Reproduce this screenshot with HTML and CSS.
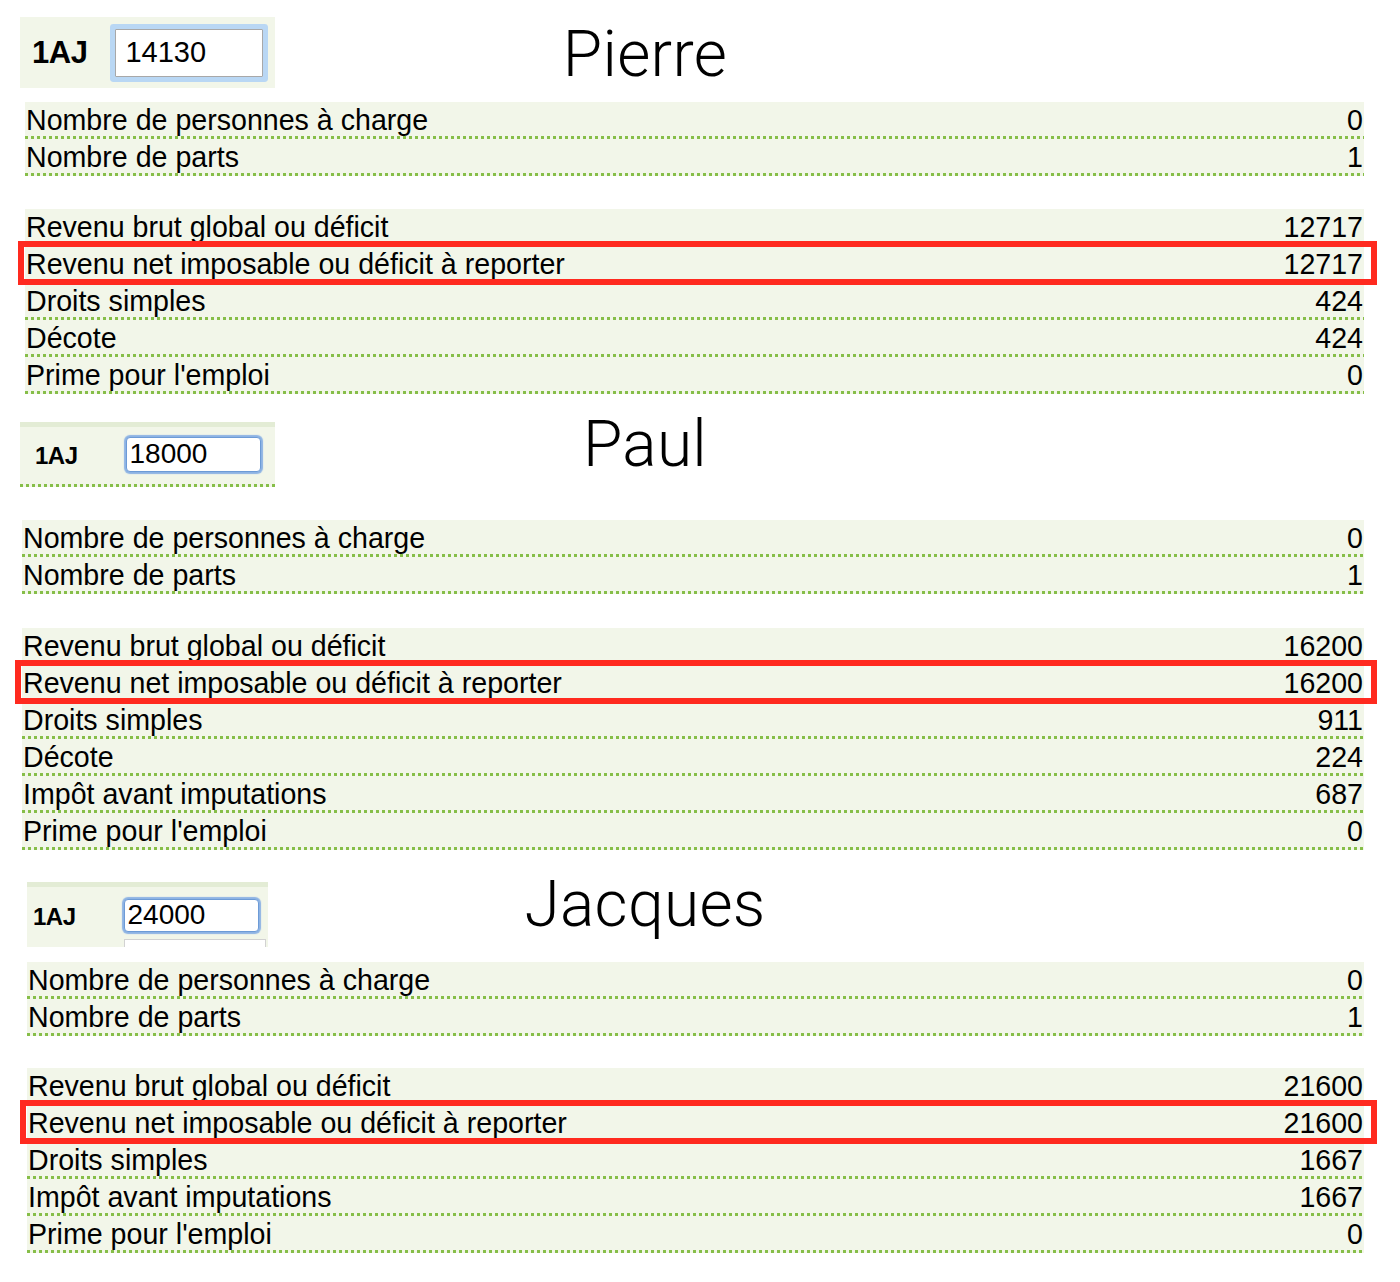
FILE: index.html
```html
<!DOCTYPE html>
<html lang="fr">
<head>
<meta charset="utf-8">
<title>Simulation impôt</title>
<link rel="stylesheet" href="styles.css">
</head>
<body>
<section class="person pierre">
  <div class="head">
    <div class="field"><span class="code">1AJ</span><input class="entry" type="text" value="14130" readonly></div>
    <h2 class="name">Pierre</h2>
  </div>
  <div class="group g1">
    <div class="row"><span>Nombre de personnes à charge</span><span>0</span></div>
    <div class="row"><span>Nombre de parts</span><span>1</span></div>
  </div>
  <div class="group g2">
    <div class="row"><span>Revenu brut global ou déficit</span><span>12717</span></div>
    <div class="row hl"><span>Revenu net imposable ou déficit à reporter</span><span>12717</span></div>
    <div class="row"><span>Droits simples</span><span>424</span></div>
    <div class="row"><span>Décote</span><span>424</span></div>
    <div class="row"><span>Prime pour l'emploi</span><span>0</span></div>
  </div>
</section>

<section class="person paul">
  <div class="head">
    <div class="field"><span class="code">1AJ</span><input class="entry" type="text" value="18000" readonly></div>
    <h2 class="name">Paul</h2>
  </div>
  <div class="group g1">
    <div class="row"><span>Nombre de personnes à charge</span><span>0</span></div>
    <div class="row"><span>Nombre de parts</span><span>1</span></div>
  </div>
  <div class="group g2">
    <div class="row"><span>Revenu brut global ou déficit</span><span>16200</span></div>
    <div class="row hl"><span>Revenu net imposable ou déficit à reporter</span><span>16200</span></div>
    <div class="row"><span>Droits simples</span><span>911</span></div>
    <div class="row"><span>Décote</span><span>224</span></div>
    <div class="row"><span>Impôt avant imputations</span><span>687</span></div>
    <div class="row"><span>Prime pour l'emploi</span><span>0</span></div>
  </div>
</section>

<section class="person jacques">
  <div class="head">
    <div class="field"><span class="code">1AJ</span><input class="entry" type="text" value="24000" readonly></div>
    <h2 class="name">Jacques</h2>
  </div>
  <div class="group g1">
    <div class="row"><span>Nombre de personnes à charge</span><span>0</span></div>
    <div class="row"><span>Nombre de parts</span><span>1</span></div>
  </div>
  <div class="group g2">
    <div class="row"><span>Revenu brut global ou déficit</span><span>21600</span></div>
    <div class="row hl"><span>Revenu net imposable ou déficit à reporter</span><span>21600</span></div>
    <div class="row"><span>Droits simples</span><span>1667</span></div>
    <div class="row"><span>Impôt avant imputations</span><span>1667</span></div>
    <div class="row"><span>Prime pour l'emploi</span><span>0</span></div>
  </div>
</section>
</body>
</html>
```
FILE: styles.css
```css
* { box-sizing: border-box; }

body {
  margin: 0;
  background: #ffffff;
  color: #000000;
  font-family: "Liberation Sans", Arial, sans-serif;
}

/* ---------- header (code + input + name) ---------- */
.head {
  display: grid;
  grid-template-columns: 275px 740px;
  align-items: start;
}

.field {
  display: flex;
  align-items: center;
  background: #f2f6e9;
  position: relative;
}

.code {
  font-weight: bold;
  letter-spacing: -0.5px;
}

.entry {
  display: block;
  margin: 0;
  background: #ffffff;
  color: #000000;
  font-family: "Liberation Sans", Arial, sans-serif;
  outline: none;
}

.name {
  margin: 0;
  text-align: center;
  font-family: Roboto, "Liberation Sans", sans-serif;
  font-weight: 300;
  font-size: 64px;
  line-height: 64px;
  letter-spacing: 0.3px;
}

/* Pierre */
.pierre { padding-top: 17px; }
.pierre .field { margin-left: 20px; width: 255px; height: 71px; }
.pierre .code { font-size: 31px; padding-left: 12px; }
.pierre .entry {
  margin-left: 28px;
  width: 148px;
  height: 48px;
  padding: 0 0 0 9px;
  border: 1px solid #a8a8a8;
  border-radius: 1px;
  box-shadow: 0 0 0 5px #b9d7f4;
  font-size: 29px;
}
.pierre .name { margin-top: 6px; }

/* Paul & Jacques headers */
.paul .field,
.jacques .field {
  height: 65px;
  border-top: 5px solid #e3ecd5;
}
.paul .code,
.jacques .code { font-size: 24px; }
.paul .entry,
.jacques .entry {
  border: 1px solid #6d9bd6;
  border-radius: 4px;
  box-shadow: 0 0 1px 2px #8db3e4;
  font-size: 28px;
  padding: 0 0 0 3px;
}
.paul .name,
.jacques .name { margin-top: -9px; }

.paul { margin-top: 28px; }
.paul .field {
  margin-left: 20px;
  width: 255px;
  border-bottom: 3px solid transparent;
  background:
    linear-gradient(to right, #86be48 50%, transparent 50%) 0 100% / 6px 3px repeat-x,
    #f2f6e9;
  background-origin: border-box;
  background-clip: border-box;
}
.paul .code { padding-left: 15px; }
.paul .entry { margin-left: 48px; width: 135px; height: 35px; margin-top: -3px; }

.jacques { margin-top: 32px; }
.jacques .field { margin-left: 27px; width: 241px; }
.jacques .code { padding-left: 6px; }
.jacques .entry { margin-left: 48px; width: 135px; height: 33px; margin-top: -4px; }
.jacques .field::after {
  content: "";
  position: absolute;
  left: 97px;
  bottom: 0;
  width: 140px;
  height: 7px;
  background: #ffffff;
  border: 1px solid #d2d2d2;
  border-bottom: none;
}

/* ---------- data rows ---------- */
.group {
  background: #f2f6e9;
}

.row {
  display: flex;
  justify-content: space-between;
  height: 37px;
  padding: 2px 1px 3px 1px;
  font-size: 28.6px;
  line-height: 32px;
  background: linear-gradient(to right, #86be48 50%, transparent 50%) 0 100% / 6px 3px repeat-x;
}

.hl { position: relative; }
.hl::after {
  content: "";
  position: absolute;
  top: -5px;
  bottom: -2px;
  left: -7px;
  right: -13px;
  border: 6px solid #ff2a1f;
}

.pierre .group { margin-left: 25px; width: 1339px; }
.pierre .g1 { margin-top: 14px; }
.pierre .g2 { margin-top: 33px; }

.paul .group { margin-left: 22px; width: 1342px; }
.paul .g1 { margin-top: 33px; }
.paul .g2 { margin-top: 34px; }

.jacques .group { margin-left: 27px; width: 1337px; }
.jacques .g1 { margin-top: 15px; }
.jacques .g2 { margin-top: 32px; }
```
